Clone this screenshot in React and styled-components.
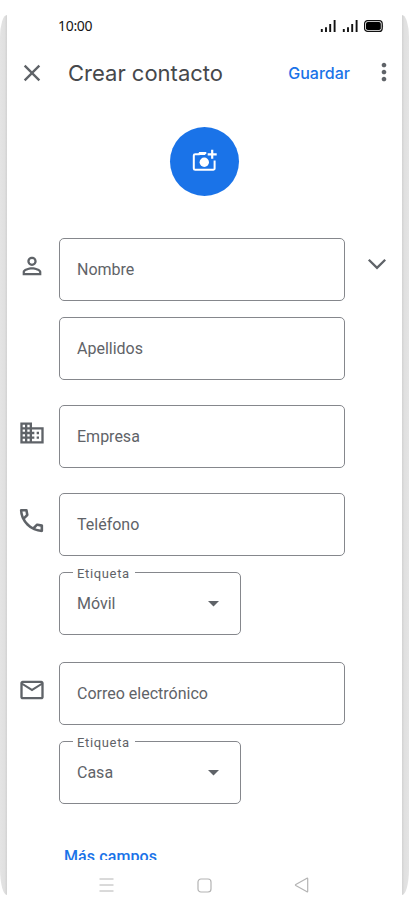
import React from "react";
import styled, { createGlobalStyle } from "styled-components";
import {
  MdClose,
  MdMoreVert,
  MdPersonOutline,
  MdBusiness,
  MdMailOutline,
} from "react-icons/md";

const colors = {
  blue: "#1a73e8",
  grey: "#5f6368",
  border: "#85878c",
  title: "#46484c",
  nav: "#b4b4b4",
};

const GlobalStyle = createGlobalStyle`
  * {
    box-sizing: border-box;
  }
  body {
    margin: 0;
    background: #fff;
    overflow: hidden;
  }
`;

const Phone = styled.div`
  display: flex;
  width: 409px;
  height: 910px;
  background: #fff;
  font-family: Roboto, sans-serif;
  color: ${colors.grey};
`;

const Edge = styled.div`
  width: 7px;
  margin: 15px 0;
  flex: none;
  background: linear-gradient(
    ${(p) => (p.$right ? "to left" : "to right")},
    #e4e4e4 0%,
    #e0e0e0 65%,
    #d2d2d2 100%
  );
  border-radius: ${(p) =>
    p.$right ? "0 7px 7px 0 / 0 22px 26px 0" : "7px 0 0 7px / 22px 0 0 26px"};
`;

const Screen = styled.main`
  display: flex;
  flex-direction: column;
  flex: 1;
  min-width: 0;
`;

const StatusBar = styled.div`
  display: flex;
  align-items: center;
  justify-content: space-between;
  height: 52px;
  padding: 0 18px 0 51px;
`;

const Clock = styled.span`
  margin-top: -2px;
  font-family: "Noto Sans", sans-serif;
  font-size: 14px;
  letter-spacing: -0.3px;
  color: #151515;
`;

const Header = styled.header`
  display: flex;
  align-items: center;
  height: 41px;
  padding: 0 4px 0 11px;
`;

const Title = styled.h1`
  flex: 1;
  margin: 0 0 0 22px;
  font-family: Inter, sans-serif;
  font-size: 22px;
  font-weight: 400;
  letter-spacing: 0;
  line-height: 30px;
  white-space: nowrap;
  color: ${colors.title};
`;

const TextButton = styled.button`
  padding: 0;
  border: 0;
  background: none;
  font-family: ${(p) => (p.$plain ? "Roboto" : "Inter")}, sans-serif;
  font-size: 16px;
  font-weight: 500;
  letter-spacing: ${(p) => (p.$plain ? "0.1px" : "0")};
  line-height: 20px;
  color: ${colors.blue};
`;

const IconButton = styled.button`
  display: flex;
  padding: 0;
  border: 0;
  background: none;
  color: ${colors.grey};
`;

const MenuButton = styled(IconButton)`
  margin: -1px 0 0 20px;
`;

const PhotoButton = styled.button`
  display: flex;
  align-items: center;
  justify-content: center;
  flex: none;
  width: 69px;
  height: 69px;
  margin: 34px auto 42px;
  padding: 0 0 1px;
  border: 0;
  border-radius: 50%;
  background: ${colors.blue};
`;

const Form = styled.form`
  display: flex;
  flex-direction: column;
  flex: 1;
  min-height: 0;
  overflow: hidden;
`;

const Group = styled.section`
  display: grid;
  grid-template-columns: 52px 286px 1fr;
  margin-bottom: ${(p) => p.$gap || 25}px;
`;

const Lead = styled.div`
  display: flex;
  justify-content: center;
  padding: ${(p) => p.$top}px 3px 0 0;
`;

const Trail = styled.div`
  display: flex;
  justify-content: center;
  padding: 20px 0 0 7px;
`;

const Fields = styled.div`
  display: flex;
  flex-direction: column;
  gap: 16px;
`;

const Field = styled.div`
  display: flex;
  align-items: center;
  height: 63px;
  padding: 0 17px;
  border: 1px solid ${colors.border};
  border-radius: 5px;
  font-size: 16px;
  letter-spacing: 0;
`;

const Select = styled(Field)`
  position: relative;
  justify-content: space-between;
  width: 182px;
  padding-right: 21px;
`;

const Legend = styled.span`
  position: absolute;
  top: -8px;
  left: 13px;
  padding: 0 5px 0 4px;
  background: #fff;
  font-size: 13px;
  letter-spacing: 0.65px;
  line-height: 18px;
`;

const More = styled.div`
  padding: 18px 0 0 57px;
`;

const NavBar = styled.nav`
  display: flex;
  justify-content: space-between;
  align-items: center;
  height: 50px;
  padding: 0 93px 0 92px;
`;

const StatusIcons = styled.div`
  display: flex;
  align-items: center;
  gap: 6px;
`;

const Signal = () => (
  <svg width="16" height="12" viewBox="0 0 16 12">
    <path
      d="M1.8 9v3M6 7.2V12M10.2 4v8M14.6 0v12"
      stroke="#111"
      strokeWidth="1.9"
      fill="none"
    />
  </svg>
);

const Battery = () => (
  <svg width="20" height="12" viewBox="0 0 20 12">
    <rect x="0.6" y="0.6" width="17.6" height="10.8" rx="3" fill="none" stroke="#111" strokeWidth="1.2" />
    <rect x="2" y="2" width="14.8" height="8" rx="1.8" fill="#000" />
    <path d="M18.4 3.5q1.4 2.5 0 5z" fill="#111" />
  </svg>
);

const CameraPlus = () => (
  <svg width="25" height="24" viewBox="0 0 25 24" fill="none">
    <path
      d="M14.3 4H8.5L7.2 5.2H3.2a1.4 1.4 0 0 0-1.4 1.4v12.8a1.4 1.4 0 0 0 1.4 1.4h18a1.4 1.4 0 0 0 1.4-1.4V11.4"
      stroke="#fff"
      strokeWidth="2"
    />
    <path d="M7 3h6.3v3H6z" fill="#fff" />
    <circle cx="12.3" cy="13.2" r="4.7" fill="#fff" />
    <path d="M20.2 0.8v9M15.7 5.3h9" stroke="#fff" strokeWidth="2.2" />
  </svg>
);

const Handset = () => (
  <svg width="31" height="31" viewBox="0 0 24 24" fill="currentColor">
    <path d="M19.95 21q-3.125 0-6.175-1.363-3.05-1.362-5.55-3.862t-3.863-5.55Q3 7.175 3 4.05q0-.45.3-.75t.75-.3H8.1q.35 0 .625.238.275.237.325.562l.65 3.5q.05.4-.025.675-.075.275-.275.475L6.975 10.9q.5.925 1.188 1.788.687.862 1.512 1.662.775.775 1.625 1.438.85.662 1.8 1.212l2.35-2.35q.225-.225.588-.338.362-.112.712-.062l3.45.7q.35.1.575.363.225.262.225.587v4.05q0 .45-.3.75t-.75.3zM6.025 9l1.65-1.65L7.25 5H5.025q.125 1.025.35 2.025T6.025 9zm8.95 8.95q.975.425 1.988.675 1.012.25 2.037.325v-2.2l-2.35-.475z" />
  </svg>
);

const Chevron = () => (
  <svg width="20" height="12" viewBox="0 0 20 12">
    <path d="M1.8 1.8 10 9.8l8.2-8" fill="none" stroke={colors.grey} strokeWidth="2.3" />
  </svg>
);

const Caret = () => (
  <svg width="11" height="6" viewBox="0 0 11 6">
    <path d="M0 0h11L5.5 5.6z" fill={colors.grey} />
  </svg>
);

const LabelSelect = ({ value }) => (
  <Select>
    <Legend>Etiqueta</Legend>
    {value}
    <Caret />
  </Select>
);

export default function App() {
  return (
    <>
      <GlobalStyle />
      <Phone>
        <Edge />
        <Screen>
          <StatusBar>
            <Clock>10:00</Clock>
            <StatusIcons>
              <Signal />
              <Signal />
              <Battery />
            </StatusIcons>
          </StatusBar>
          <Header>
            <IconButton type="button" aria-label="Cerrar">
              <MdClose size={28} />
            </IconButton>
            <Title>Crear contacto</Title>
            <TextButton type="button">Guardar</TextButton>
            <MenuButton type="button" aria-label="Opciones">
              <MdMoreVert size={28} />
            </MenuButton>
          </Header>
          <PhotoButton type="button" aria-label="Foto">
            <CameraPlus />
          </PhotoButton>
          <Form>
            <Group>
              <Lead $top={14}>
                <MdPersonOutline size={28} />
              </Lead>
              <Fields>
                <Field>Nombre</Field>
                <Field>Apellidos</Field>
              </Fields>
              <Trail>
                <Chevron />
              </Trail>
            </Group>
            <Group>
              <Lead $top={14}>
                <MdBusiness size={28} />
              </Lead>
              <Fields>
                <Field>Empresa</Field>
              </Fields>
            </Group>
            <Group $gap={27}>
              <Lead $top={12}>
                <Handset />
              </Lead>
              <Fields>
                <Field>Teléfono</Field>
                <LabelSelect value="Móvil" />
              </Fields>
            </Group>
            <Group>
              <Lead $top={14}>
                <MdMailOutline size={28} />
              </Lead>
              <Fields>
                <Field>Correo electrónico</Field>
                <LabelSelect value="Casa" />
              </Fields>
            </Group>
            <More>
              <TextButton type="button" $plain>
                Más campos
              </TextButton>
            </More>
          </Form>
          <NavBar>
            <svg width="15" height="14" viewBox="0 0 15 14">
              <path d="M0.5 1h14M0.5 7h14M0.5 13h14" stroke={colors.nav} />
            </svg>
            <svg width="15" height="15" viewBox="0 0 15 15">
              <rect x="1" y="1" width="13" height="13" rx="3" fill="none" stroke={colors.nav} strokeWidth="1.2" />
            </svg>
            <svg width="15" height="16" viewBox="0 0 15 16">
              <path
                d="M13 1.2 1.8 7.4q-.8.6 0 1.2L13 14.8q.7.2.7-.6V1.8q0-.8-.7-.6z"
                fill="none"
                stroke={colors.nav}
                strokeWidth="1.2"
              />
            </svg>
          </NavBar>
        </Screen>
        <Edge $right />
      </Phone>
    </>
  );
}
